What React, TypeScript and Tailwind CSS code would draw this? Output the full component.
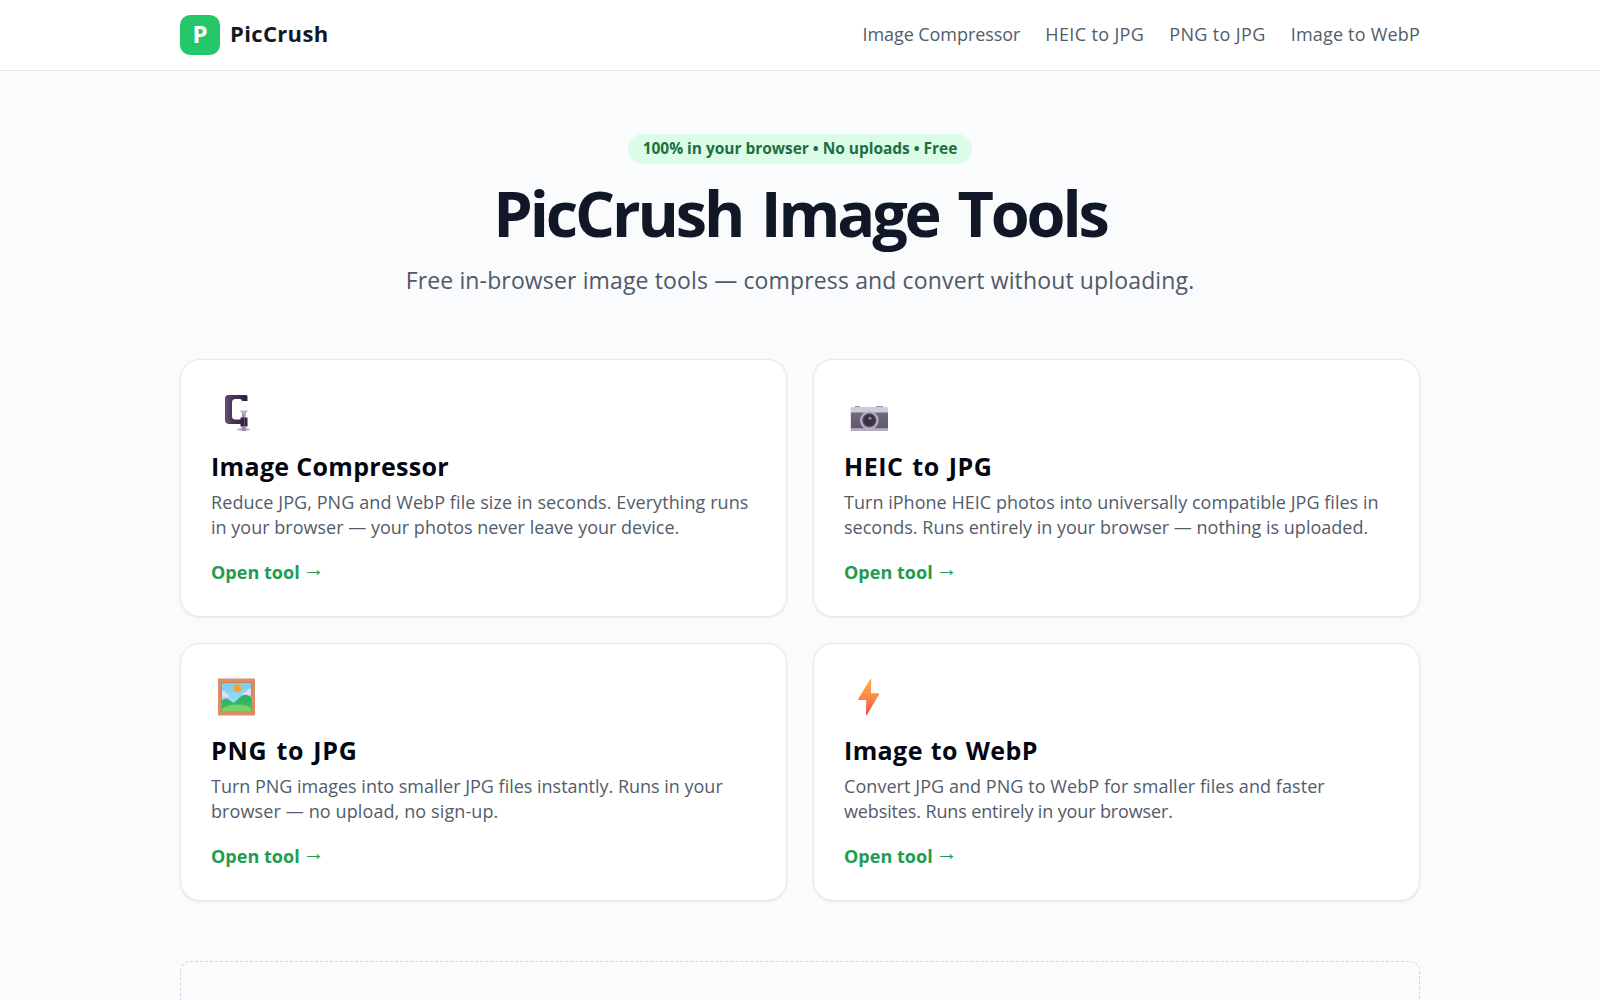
import type { ReactNode } from "react";

interface Line {
  text: string;
  className: string;
}

interface Tool {
  title: string;
  titleClass: string;
  lines: Line[];
  icon: ReactNode;
}

const navLinks = [
  { label: "Image Compressor", className: "tracking-[-0.07px]" },
  { label: "HEIC to JPG", className: "tracking-[0.36px]" },
  { label: "PNG to JPG", className: "tracking-[0.36px]" },
  { label: "Image to WebP", className: "tracking-[0.2px]" },
];

function ClampIcon() {
  return (
    <svg viewBox="0 0 48 46" className="h-[46px] w-12" fill="none">
      <defs>
        <linearGradient id="clamp" x1="0" y1="0" x2="1" y2="0">
          <stop offset="0" stopColor="#5a4870" />
          <stop offset="0.6" stopColor="#3f2d4c" />
          <stop offset="1" stopColor="#2b1c38" />
        </linearGradient>
      </defs>
      <path
        d="M17.500 5H35q1.500 0 1.500 1.500v4.500H31q-.5-2-2-2h-4.500q-3.500 0-3.500 3.500V26q0 3.500 3.500 3.500H31V34H18.500Q14 34 14 29.500v-21Q14 5 17.500 5z"
        fill="url(#clamp)"
      />
      <path d="M16 8.500v21q0 2.500 3 2.500" stroke="#6a5885" strokeWidth="1" />
      <path d="M29 20.500h8l-2 3v5h-4v-5z" fill="#b9b0c4" />
      <path d="M31.500 24h1.500v4h-1.500z" fill="#8d8398" />
      <path d="M29.500 27.500h7v9h-7z" fill="#34243f" />
      <path d="M33.500 28v8.500" stroke="#66527c" strokeWidth="1" />
      <ellipse cx="32.500" cy="39.500" rx="6.500" ry="1.500" fill="#bdb3c8" />
      <path d="M30.500 36.500H35v4.500h-4.500z" fill="#9a8ea9" />
    </svg>
  );
}

function CameraIcon() {
  return (
    <svg viewBox="0 0 48 46" className="h-[46px] w-12" fill="none">
      <defs>
        <linearGradient id="cameraBody" x1="0" y1="0" x2="0" y2="1">
          <stop offset="0" stopColor="#6f6a7a" />
          <stop offset="1" stopColor="#5f5a6a" />
        </linearGradient>
      </defs>
      <path d="M11 16h5v2h-5zM32 16h7v2h-7z" fill="#9a94a6" />
      <rect x="6.500" y="17" width="37.500" height="24" rx="1.500" fill="#cfcadc" />
      <path d="M7 22.500h37v16H7z" fill="url(#cameraBody)" />
      <path d="M7 38.500h37v1.700a.8.8 0 0 1-.8.8H7.800a.8.8 0 0 1-.8-.8z" fill="#b7a8c8" />
      <circle cx="25.300" cy="30.300" r="9.300" fill="#b7b2c0" />
      <circle cx="25.300" cy="30.300" r="7.200" fill="#645d6e" />
      <circle cx="25.300" cy="30.300" r="6" fill="#3b3247" />
      <circle cx="26" cy="28.200" r="1.500" fill="#8f869d" />
    </svg>
  );
}

function PictureIcon() {
  return (
    <svg viewBox="0 0 48 46" className="h-[46px] w-12" fill="none">
      <defs>
        <linearGradient id="sky" x1="0" y1="0" x2="0" y2="1">
          <stop offset="0" stopColor="#79cdf3" />
          <stop offset="1" stopColor="#a9e4f5" />
        </linearGradient>
        <linearGradient id="hill" x1="0" y1="0" x2="0" y2="1">
          <stop offset="0" stopColor="#2fae5c" />
          <stop offset="1" stopColor="#3fc069" />
        </linearGradient>
      </defs>
      <rect x="7" y="4.500" width="37" height="37" rx="1" fill="#d98f66" />
      <rect x="10.300" y="8.300" width="30.400" height="29.700" fill="#c47c56" />
      <rect x="11" y="9" width="29" height="28.300" fill="url(#sky)" />
      <path d="M11 17c2-.5 3.600.5 4 2.300 2 .2 3 1.500 3.200 3.700H11z" fill="#e6dcf7" />
      <path d="M40 14.500c-2.500 0-4 1.300-4.500 3.200-2 0-3.300 1.200-4.200 3.800H40z" fill="#e6dcf7" />
      <circle cx="26.300" cy="14.300" r="3.900" fill="#f0a52c" />
      <path
        d="M11 26.500c3-2.500 6-2.200 8.500.3l3 2.200 7.500-6.500c3.500-2.800 7-1.700 10 1v13.800H11z"
        fill="url(#hill)"
      />
      <path d="M11 35c8-5.500 22-6 29-1v3.300H11z" fill="#78d364" />
    </svg>
  );
}

function BoltIcon() {
  return (
    <svg viewBox="0 0 48 46" className="h-[46px] w-12" fill="none">
      <defs>
        <linearGradient id="bolt" x1="0" y1="0" x2="0" y2="1">
          <stop offset="0" stopColor="#fbb04a" />
          <stop offset="0.500" stopColor="#fb8a42" />
          <stop offset="1" stopColor="#ef4a4e" />
        </linearGradient>
      </defs>
      <path
        d="M26.200 5.200c.4-.7 1-.5 1 .3l-.2 13.700h7.400c.7 0 1 .6.6 1.200L22.900 41c-.4.6-1 .4-1-.3l.4-14.700h-7.300c-.7 0-1-.6-.7-1.200z"
        fill="url(#bolt)"
      />
    </svg>
  );
}

const tools: Tool[] = [
  {
    title: "Image Compressor",
    titleClass: "tracking-[0.32px]",
    lines: [
      {
        text: "Reduce JPG, PNG and WebP file size in seconds. Everything runs",
        className: "tracking-[0.08px]",
      },
      {
        text: "in your browser — your photos never leave your device.",
        className: "tracking-[0.01px]",
      },
    ],
    icon: <ClampIcon />,
  },
  {
    title: "HEIC to JPG",
    titleClass: "tracking-[0.5px] [word-spacing:2px]",
    lines: [
      {
        text: "Turn iPhone HEIC photos into universally compatible JPG files in",
        className: "tracking-[0.03px]",
      },
      {
        text: "seconds. Runs entirely in your browser — nothing is uploaded.",
        className: "tracking-[0.01px]",
      },
    ],
    icon: <CameraIcon />,
  },
  {
    title: "PNG to JPG",
    titleClass: "tracking-[0.7px] [word-spacing:2px]",
    lines: [
      {
        text: "Turn PNG images into smaller JPG files instantly. Runs in your",
        className: "tracking-[-0.01px]",
      },
      {
        text: "browser — no upload, no sign-up.",
        className: "tracking-[0.11px]",
      },
    ],
    icon: <PictureIcon />,
  },
  {
    title: "Image to WebP",
    titleClass: "tracking-[0.4px] [word-spacing:1px]",
    lines: [
      {
        text: "Convert JPG and PNG to WebP for smaller files and faster",
        className: "tracking-[0.06px]",
      },
      {
        text: "websites. Runs entirely in your browser.",
        className: "tracking-[-0.13px]",
      },
    ],
    icon: <BoltIcon />,
  },
];

function Header() {
  return (
    <header className="h-[71px] border-b border-gray-200 bg-white">
      <div className="mx-auto flex h-[70px] w-[1240px] items-center justify-between">
        <a href="#" className="flex items-center gap-[10px]">
          <span className="flex size-10 items-center justify-center rounded-[10px] bg-linear-to-b from-[#25c666] to-[#22c76c] pb-[3px] text-[24px] leading-none font-bold text-white">
            P
          </span>
          <span className="pb-[3px] text-[22px] font-bold tracking-[0.35px] text-gray-900">
            PicCrush
          </span>
        </a>
        <nav className="flex items-center gap-[25px] pb-[2px] text-[18px] text-[#525c6a]">
          {navLinks.map((link) => (
            <a key={link.label} href="#" className={link.className}>
              {link.label}
            </a>
          ))}
        </nav>
      </div>
    </header>
  );
}

function ToolCard({ tool }: { tool: Tool }) {
  return (
    <a
      href="#"
      className="block h-[258px] rounded-[20px] border border-gray-200 bg-white p-[30px] whitespace-nowrap shadow-[0_1px_3px_rgba(0,0,0,0.07)]"
    >
      {tool.icon}
      <h2
        className={`mt-3 text-[25px] leading-9 font-bold text-gray-950 ${tool.titleClass}`}
      >
        {tool.title}
      </h2>
      <p className="mt-[6px] text-[18px] leading-[25px] text-[#525c6a]">
        {tool.lines.map((line) => (
          <span key={line.text} className={`block ${line.className}`}>
            {line.text}
          </span>
        ))}
      </p>
      <div className="mt-5 flex h-[25px] items-center gap-[3px] text-[18px] leading-[25px] font-bold text-[#219c4f]">
        <span className="tracking-[0.03px]">Open tool</span>
        <span className="pb-[8px] font-['Liberation_Sans'] text-[22px] font-normal">→</span>
      </div>
    </a>
  );
}

export default function App() {
  return (
    <div className="h-[1000px] overflow-hidden bg-[#fafbfd] font-['Open_Sans','Noto_Sans',sans-serif]">
      <Header />
      <main className="mx-auto w-[1240px]">
        {/* Hero */}
        <section className="flex flex-col items-center pt-[63px] whitespace-nowrap">
          <div className="h-[30px] w-[344px] rounded-full bg-green-100 text-center text-[15.5px] leading-7 font-bold tracking-[-0.03px] text-[#1d6f42]">
            100% in your browser • No uploads • Free
          </div>
          <h1 className="mt-[17px] text-[63px] leading-[64px] font-bold tracking-[-3.15px] text-gray-900 [word-spacing:5.5px]">
            PicCrush Image Tools
          </h1>
          <p className="mt-[19px] text-[23px] leading-8 tracking-[0.14px] text-[#4f5967]">
            Free in-browser image tools — compress and convert without uploading.
          </p>
        </section>

        {/* Tools */}
        <section className="mt-[63px] grid grid-cols-2 gap-[26px]">
          {tools.map((tool) => (
            <ToolCard key={tool.title} tool={tool} />
          ))}
        </section>

        <div className="mt-[60px] h-[130px] rounded-[10px] border border-dashed border-gray-300" />
      </main>
    </div>
  );
}
